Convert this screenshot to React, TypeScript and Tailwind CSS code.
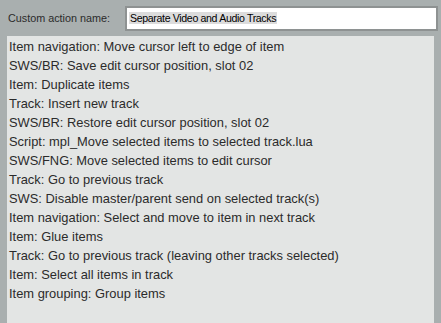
const actions = [
  "Item navigation: Move cursor left to edge of item",
  "SWS/BR: Save edit cursor position, slot 02",
  "Item: Duplicate items",
  "Track: Insert new track",
  "SWS/BR: Restore edit cursor position, slot 02",
  "Script: mpl_Move selected items to selected track.lua",
  "SWS/FNG: Move selected items to edit cursor",
  "Track: Go to previous track",
  "SWS: Disable master/parent send on selected track(s)",
  "Item navigation: Select and move to item in next track",
  "Item: Glue items",
  "Track: Go to previous track (leaving other tracks selected)",
  "Item: Select all items in track",
  "Item grouping: Group items",
];

export default function App() {
  return (
    <div className="flex h-[323px] w-[441px] flex-col overflow-hidden bg-[#a9afaf] font-['Liberation_Sans',sans-serif] text-[#2b2b2b]">
      <div className="flex h-[36px] items-center pl-[8px] pr-[3px]">
        <span className="w-[117px] text-[10.8px]">Custom action name:</span>
        <div className="flex h-[25px] flex-1 items-center border-2 border-[#8e9292] bg-white pl-[2px]">
          <span className="bg-[#dcdcdc] px-[1px] text-[10.6px] leading-[12px] tracking-[-0.35px] text-black">
            Separate Video and Audio Tracks
          </span>
        </div>
      </div>
      <div className="ml-[7px] mr-[7px] flex-1 bg-[#e3e5e4] pl-[2px] pt-[1px]">
        {actions.map((a) => (
          <div key={a} className="h-[19px] text-[12.9px] leading-[19px]">
            {a}
          </div>
        ))}
      </div>
    </div>
  );
}
